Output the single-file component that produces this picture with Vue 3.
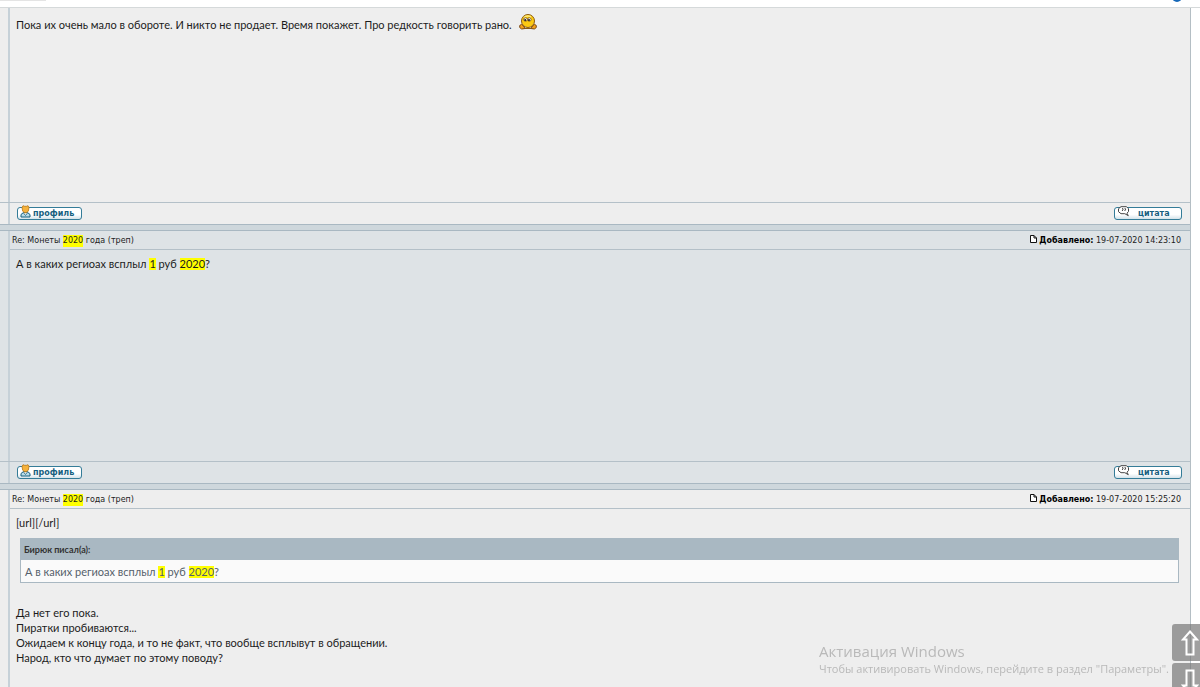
<template>
  <div class="page">
    <header class="topbar">
      <span class="topbar-tab"></span>
      <span class="topbar-dot"></span>
    </header>

    <main class="topic">
      <article
        v-for="post in posts"
        :key="post.id"
        class="post"
        :class="{ 'post-alt': post.alt, 'post-last': post.last }"
      >
        <div class="row row-main">
          <div class="gutter"></div>
          <div class="content">
            <div v-if="post.date" class="post-head">
              <span>Re: Монеты <mark>2020</mark> года (треп)</span>
              <span class="post-date">
                <svg class="icon-page" viewBox="0 0 7 8" aria-hidden="true">
                  <path d="M.5.5h3.500L6.500 3v4.500H.5z" fill="#fff" stroke="#111" />
                  <path d="M4 .5V3h2.500" fill="none" stroke="#111" />
                </svg>
                <b>Добавлено:</b> {{ post.date }}
              </span>
            </div>

            <div class="post-body">
              <p v-if="post.id === 1">
                Пока их очень мало в обороте. И никто не продает. Время покажет. Про редкость говорить рано.
                <svg class="smile" viewBox="0 0 18 16" role="img" aria-label="Смайлик">
                  <circle cx="9" cy="7" r="6.500" fill="#fbc912" stroke="#8a5a12" />
                  <path d="M5 3.500Q8 1 12 3" fill="none" stroke="#ffec80" stroke-width="1.500" />
                  <ellipse cx="6.500" cy="5.500" rx="1.800" ry="1.700" fill="#fff" stroke="#59380b" stroke-width=".7" />
                  <ellipse cx="10.300" cy="5.500" rx="1.800" ry="1.700" fill="#fff" stroke="#59380b" stroke-width=".7" />
                  <circle cx="6.200" cy="5.900" r="1" fill="#22160a" />
                  <circle cx="10" cy="5.900" r="1" fill="#22160a" />
                  <path d="M.7 11.500Q2.500 9 4.500 12L6 14.500Q2 16 .7 13.500zM17.300 11.500Q15.500 9 13.500 12L12 14.500Q16 16 17.300 13.500z" fill="#f3a11a" stroke="#713f10" stroke-width=".9" />
                  <path d="M5.500 14.500h7" stroke="#8a5a12" />
                </svg>
              </p>
              <p v-else-if="post.id === 2">А в каких региоах всплыл <mark>1</mark> руб <mark>2020</mark>?</p>
              <template v-else>
                <p>[url][/url]</p>
                <blockquote class="quote">
                  <div class="quote-title">Бирюк писал(а):</div>
                  <div class="quote-text">А в каких региоах всплыл <mark>1</mark> руб <mark>2020</mark>?</div>
                </blockquote>
                <p>
                  Да нет его пока.<br />
                  Пиратки пробиваются...<br />
                  Ожидаем к концу года, и то не факт, что вообще всплывут в обращении.<br />
                  Народ, кто что думает по этому поводу?
                </p>
              </template>
            </div>
          </div>
        </div>

        <div v-if="!post.last" class="row row-foot">
          <div class="gutter"></div>
          <div class="post-actions">
            <a href="#profile" class="btn">
              <svg class="icon-user" viewBox="0 0 11 13" aria-hidden="true">
                <path d="M1 12V9.500L3.500 7.500h4L10 9.500V12z" fill="#b9dbe8" stroke="#17607f" />
                <path d="M3.500 8l2 2.500L7.500 8" fill="#fff" stroke="#17607f" stroke-width=".8" />
                <path d="M2 2.500L3 .7l1.500.6h2L8 .7l1 1.800-.7 3.700-2 1.600H4.700l-2-1.600z" fill="#f5b23d" stroke="#b87615" stroke-width=".8" />
              </svg>
              профиль
            </a>
            <a href="#quote" class="btn btn-quote">
              <svg class="icon-quote" viewBox="0 0 13 11" aria-hidden="true">
                <path d="M4 .7h5.500l2 2v2.800L10 7.200l1.300 2.500-3.500-2H4L1.500 5.700V2.700z" fill="#fff" stroke="#444" />
                <path d="M5 2.700h1v1.200L5 5M7.500 2.700h1v1.200l-1 1.100" fill="none" stroke="#333" stroke-width=".9" />
              </svg>
              цитата
            </a>
          </div>
        </div>
      </article>
    </main>

    <aside class="activation">
      <div class="activation-title">Активация Windows</div>
      <div class="activation-text">Чтобы активировать Windows, перейдите в раздел "Параметры".</div>
    </aside>

    <nav class="scroller">
      <button type="button" aria-label="Вверх" @click="scrollToTop">
        <svg viewBox="0 0 18 26" aria-hidden="true">
          <path d="M9 1.500L16 9.500H12.500V24.500H5.500V9.500H2z" />
        </svg>
      </button>
      <button type="button" aria-label="Вниз" @click="scrollToBottom">
        <svg viewBox="0 0 18 26" aria-hidden="true">
          <path d="M9 24.500L16 16.500H12.500V1.500H5.500V16.500H2z" />
        </svg>
      </button>
    </nav>
  </div>
</template>

<script setup>
const posts = [
  { id: 1, date: '', alt: false, last: false },
  { id: 2, date: '19-07-2020 14:23:10', alt: true, last: false },
  { id: 3, date: '19-07-2020 15:25:20', alt: false, last: true }
]

const scrollToTop = () => window.scrollTo({ top: 0, behavior: 'smooth' })

const scrollToBottom = () => {
  window.scrollTo({ top: document.body.scrollHeight, behavior: 'smooth' })
}
</script>

<style>
body {
  margin: 0;
  background: #fff;
}
</style>

<style scoped>
.page {
  display: flex;
  flex-direction: column;
  min-height: 100vh;
  font-family: Lato, "Noto Sans", sans-serif;
  font-size: 11px;
  line-height: 15px;
  color: #1c1c1c;
}

.topbar {
  display: flex;
  justify-content: space-between;
  height: 7px;
  padding-right: 18px;
  overflow: hidden;
  border-bottom: 1px solid #d5d9da;
}

.topbar-tab {
  width: 46px;
  height: 1px;
  background: #e4e4e4;
}

.topbar-dot {
  width: 10px;
  height: 10px;
  margin-top: -8px;
  border-radius: 50%;
  background: #1668b8;
}

.topic {
  flex: 1;
  display: flex;
  flex-direction: column;
  margin-right: 9px;
  border-right: 1px solid #b4bec4;
}

.post {
  display: flex;
  flex-direction: column;
  background: #eee;
  border-bottom: 5px solid #ced7dc;
}

.post-alt {
  background: #dee3e6;
}

.post-last {
  flex: 1;
  border-bottom: none;
}

.row {
  display: flex;
}

.row-main {
  flex: 1;
}

.gutter {
  flex: none;
  width: 8px;
  border-right: 2px solid #c6d1d8;
}

.content {
  flex: 1;
}

.post + .post {
  border-top: 1px solid #a9b8c2;
}

.post-head {
  display: flex;
  justify-content: space-between;
  align-items: center;
  height: 18px;
  padding: 0 9px 0 2px;
  border-bottom: 1px solid #b4c0c8;
  font-family: "DejaVu Sans", Verdana, sans-serif;
  font-size: 8px;
}

.post-date b {
  color: #000;
}

.icon-page {
  width: 7px;
  height: 8px;
  margin-right: 2px;
}

.post-body {
  min-height: 199px;
  padding: 6px 11px 6px 6px;
}

.post:first-child .post-body {
  min-height: 179px;
  padding-top: 9px;
}

.post-last .post-body {
  min-height: 0;
}

p {
  margin: 0;
}

mark {
  display: inline-block;
  line-height: 12px;
  background: #ff0;
  color: inherit;
}

.smile {
  width: 18px;
  height: 16px;
  margin: -4px 0 0 4px;
  vertical-align: -1px;
}

.quote {
  margin: 8px 0 22px 4px;
  border: 1px solid #a9b8c2;
  background: #fafafa;
  color: #55606a;
}

.quote-title {
  padding: 3px;
  background: #a9b8c2;
  color: #333;
  font-size: 9px;
  font-weight: bold;
}

.quote-text {
  padding: 4px 4px 3px;
}

.row-foot {
  height: 21px;
  border-top: 1px solid #b4c0c8;
  border-bottom: 1px solid #a9b8c2;
}

.post-actions {
  flex: 1;
  display: flex;
  align-items: center;
  justify-content: space-between;
  padding: 0 8px 0 7px;
}

.btn {
  position: relative;
  box-sizing: border-box;
  width: 65px;
  height: 13px;
  padding-left: 15px;
  border: 1px solid #347c98;
  border-radius: 3px;
  background: linear-gradient(#fff 60%, #d5e3ea);
  color: #17607f;
  font-family: "DejaVu Sans", Verdana, sans-serif;
  font-size: 8px;
  font-weight: bold;
  line-height: 11px;
  text-decoration: none;
}

.btn-quote {
  width: 68px;
  padding-left: 23px;
}

.icon-user {
  position: absolute;
  top: -3px;
  left: 2px;
  width: 11px;
  height: 13px;
}

.icon-quote {
  position: absolute;
  top: -2px;
  left: 2px;
  width: 13px;
  height: 11px;
}

.activation {
  position: fixed;
  right: 31px;
  bottom: 10px;
  color: #b9b9b9;
  font-family: "Open Sans", "Noto Sans", sans-serif;
  white-space: nowrap;
}

.activation-title {
  font-size: 15px;
  line-height: 20px;
}

.activation-text {
  font-size: 11px;
  line-height: 16px;
}

.scroller {
  position: fixed;
  right: 0;
  bottom: -13px;
  display: flex;
  flex-direction: column;
  gap: 2px;
}

.scroller button {
  display: flex;
  align-items: center;
  justify-content: flex-end;
  width: 28px;
  height: 37px;
  padding: 0 1px;
  border: none;
  border-radius: 3px 0 0 3px;
  background: rgba(120, 120, 120, 0.7);
  cursor: pointer;
}

.scroller svg {
  width: 18px;
  height: 26px;
  fill: none;
  stroke: #fff;
  stroke-width: 2;
}
</style>
